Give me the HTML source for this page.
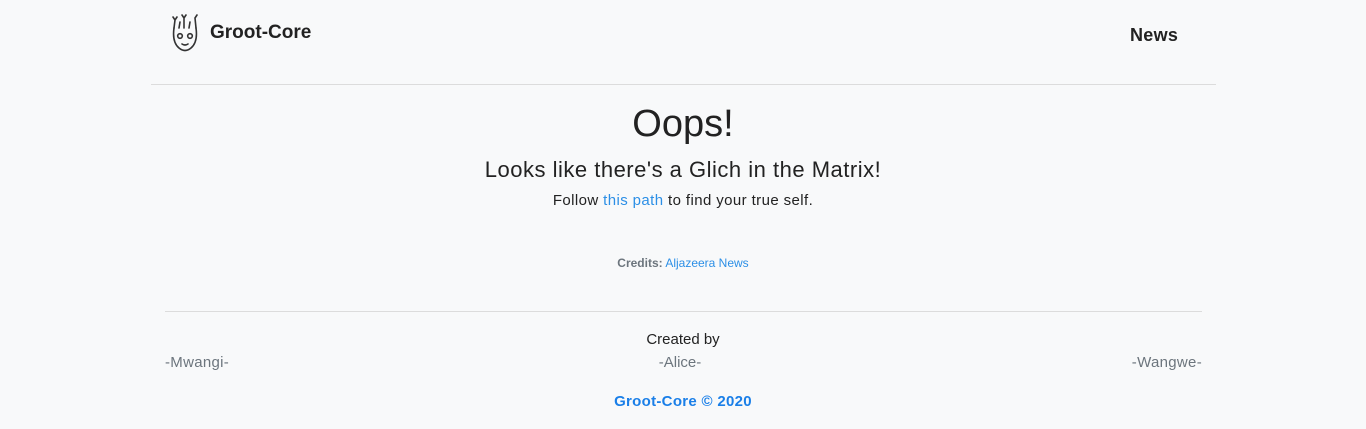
<!DOCTYPE html>
<html><head><style>
body{margin:0;background:#f8f9fa;font-family:"Liberation Sans",sans-serif;color:#212529;width:1366px;height:429px;position:relative;overflow:hidden}
.a{position:absolute;white-space:nowrap}
</style></head><body>
<svg class="a" style="left:170px;top:14px" width="30" height="40" viewBox="0 0 30 40" fill="none" stroke="#333" stroke-width="1.6" stroke-linecap="round">
<path d="M4 14 Q2 28 9 34 Q15 39 21 34 Q28 28 26 14"/>
<path d="M4 14 L5 6 M5 6 L3 3 M5 6 L7 3 M9 14 L10 8 M14 14 L14 4 M14 4 L12 1 M14 4 L16 1 M19 14 L20 8 M26 14 L25 4 M25 4 L27 1"/>
<circle cx="10" cy="22" r="2.3"/><circle cx="20" cy="22" r="2.3"/>
<path d="M12 30 Q15 32 18 30"/>
</svg>
<div class="a" style="left:210px;top:22px;font-size:19px;font-weight:bold;color:#222">Groot-Core</div>
<div class="a" style="left:1130px;top:25px;font-size:18px;font-weight:bold;color:#222;letter-spacing:0.3px">News</div>
<div class="a" style="left:151px;top:84px;width:1065px;height:1px;background:#dcdcdc"></div>
<div class="a" style="left:0;width:1366px;text-align:center;top:103px;font-size:38px;color:#222">Oops!</div>
<div class="a" style="left:0;width:1366px;text-align:center;top:157px;font-size:22px;color:#222;letter-spacing:0.5px">Looks like there's a Glich in the Matrix!</div>
<div class="a" style="left:0;width:1366px;text-align:center;top:192px;font-size:15px;color:#222;letter-spacing:0.4px">Follow <span style="color:#2c8fe6">this path</span> to find your true self.</div>
<div class="a" style="left:0;width:1366px;text-align:center;top:256px;font-size:12px;color:#6c757d"><b>Credits:</b> <span style="color:#2c8fe6">Aljazeera News</span></div>
<div class="a" style="left:165px;top:311px;width:1037px;height:1px;background:#dcdcdc"></div>
<div class="a" style="left:0;width:1366px;text-align:center;top:331px;font-size:15px;color:#222">Created by</div>
<div class="a" style="left:165px;top:354px;font-size:15px;color:#6c757d;letter-spacing:0.3px">-Mwangi-</div>
<div class="a" style="left:0;width:1360px;text-align:center;top:354px;font-size:15px;color:#6c757d">-Alice-</div>
<div class="a" style="right:164px;top:354px;font-size:15px;color:#6c757d;letter-spacing:0.3px">-Wangwe-</div>
<div class="a" style="left:0;width:1366px;text-align:center;top:393px;font-size:15px;font-weight:bold;color:#1a7fe8;letter-spacing:0.3px">Groot-Core © 2020</div>
</body></html>
